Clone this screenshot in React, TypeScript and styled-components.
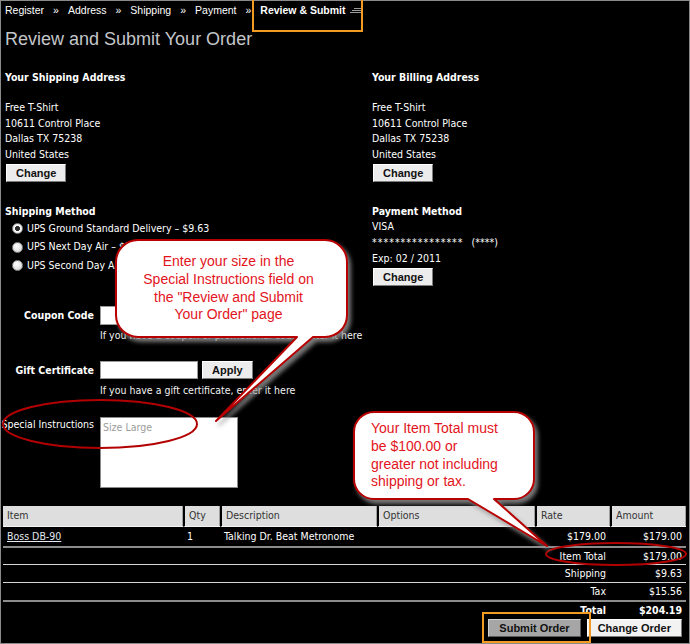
import React from 'react';
import styled, { createGlobalStyle } from 'styled-components';

const GlobalStyle = createGlobalStyle`
  html, body {
    margin: 0;
    padding: 0;
    background: #000;
  }
  body {
    font-family: "DejaVu Sans Condensed", "DejaVu Sans", sans-serif;
    font-stretch: condensed;
    font-size: 10.5px;
    color: #fff;
  }
`;

const arial = `"Liberation Sans", Arial, sans-serif`;

const Page = styled.div`
  position: relative;
  width: 690px;
  height: 644px;
  background: #000;
  box-shadow: inset 0 0 0 1px #8a8a8a;
  overflow: hidden;
  line-height: 15.6px;
`;

const Crumbs = styled.nav`
  display: flex;
  align-items: center;
  gap: 9px;
  height: 20px;
  padding-left: 5px;
  font: 10.5px ${arial};
`;

const Crumb = styled.span<{ $current?: boolean }>`
  font-weight: ${({ $current }) => ($current ? 700 : 400)};
`;

const Title = styled.h1`
  margin: 8px 0 0 5px;
  font: 18px/22px ${arial};
  font-weight: normal;
  color: #c4c6c9;
`;

const Columns = styled.div`
  display: grid;
  grid-template-columns: 367px 1fr;
  row-gap: 21px;
  margin-top: 19px;
  padding-left: 5px;
`;

const Block = styled.div`
  display: flex;
  flex-direction: column;
  align-items: flex-start;
`;

const Heading = styled.h3`
  margin: 0;
  font-size: 10.5px;
  line-height: 16px;
  font-weight: bold;
`;

const Address = styled.div`
  margin-top: 15px;
`;

const Line = styled.div`
  line-height: 15.6px;
  white-space: pre;
`;

const Mask = styled.span`
  letter-spacing: 1px;
  margin-right: 8px;
`;

const SmallButton = styled.button`
  height: 18px;
  padding: 0 9px;
  background: #ececec;
  border: 1px solid;
  border-color: #fff #7c7c7c #7c7c7c #fff;
  font: bold 11px ${arial};
  color: #111;
  cursor: pointer;
`;

const ChangeButton = styled(SmallButton)`
  margin: 2px 0 0 1px;
`;

const RadioList = styled.div`
  padding-left: 7px;
`;

const RadioRow = styled.label`
  display: flex;
  align-items: center;
  gap: 4px;
  height: 18.5px;
`;

const Radio = styled.input`
  appearance: none;
  margin: 0;
  width: 11px;
  height: 11px;
  border-radius: 50%;
  border: 1px solid #8c8c8c;
  background: radial-gradient(circle at 40% 35%, #fff 0%, #d8d8d8 80%);
  &:checked {
    background: radial-gradient(circle, #2b2b2b 0 2.2px, #fff 2.8px, #d4d4d4 100%);
  }
`;

const Form = styled.div`
  margin-top: 20px;
`;

const FormRow = styled.div<{ $top: number }>`
  display: grid;
  grid-template-columns: 94px 1fr;
  column-gap: 6px;
  margin-top: ${({ $top }) => $top}px;
`;

const FieldLabel = styled.label<{ $bold?: boolean; $lh: number }>`
  text-align: right;
  font-weight: ${({ $bold }) => ($bold ? 'bold' : 'normal')};
  line-height: ${({ $lh }) => $lh}px;
  white-space: nowrap;
`;

const Inline = styled.div`
  display: flex;
  align-items: center;
  gap: 4px;
`;

const TextInput = styled.input<{ $h: number }>`
  box-sizing: border-box;
  width: 98px;
  height: ${({ $h }) => $h}px;
  margin: 0;
  border: 1px solid #9a9a9a;
  background: #fff;
`;

const Help = styled.div<{ $top: number }>`
  margin-top: ${({ $top }) => $top}px;
  line-height: 16px;
  white-space: nowrap;
  color: #f2f2f2;
`;

const Notes = styled.textarea`
  display: block;
  box-sizing: border-box;
  width: 138px;
  height: 71px;
  margin: 0;
  padding: 2px;
  border: 1px solid #8a8a8a;
  background: #fff;
  resize: none;
  font: inherit;
  &::placeholder {
    color: #9c9c9c;
  }
`;

const OrderTable = styled.table`
  margin: 18px 0 0 3px;
  width: 683px;
  border-collapse: separate;
  border-spacing: 0;
  table-layout: fixed;
`;

const Th = styled.th`
  height: 20px;
  padding: 0 4px;
  text-align: left;
  font-weight: normal;
  color: #333;
  background: #dedede;
  border-bottom: 1px solid #f4f4f4;
  box-shadow: inset -1px 0 0 #a0a0a0;
  & + & {
    border-left: 2px solid #000;
  }
`;

const rules = {
  thick: '2px solid #8c8c8c',
  thin: '1px solid #d6d6d6',
  none: '0',
};

const Row = styled.tr<{ $lh: number; $rule: keyof typeof rules; $bold?: boolean }>`
  & > td {
    padding: 0 4px;
    line-height: ${({ $lh }) => $lh}px;
    border-bottom: ${({ $rule }) => rules[$rule]};
    font-weight: ${({ $bold }) => ($bold ? 'bold' : 'normal')};
    white-space: nowrap;
  }
`;

const Num = styled.td`
  text-align: right;
`;

const ItemLink = styled.a`
  color: #e2e8ef;
  text-decoration: underline;
`;

const Actions = styled.div`
  display: flex;
  justify-content: flex-end;
  gap: 6px;
  margin-top: 1px;
  padding-right: 8px;
`;

const ActionButton = styled(SmallButton)<{ $primary?: boolean }>`
  padding: 0 10px;
  background: ${({ $primary }) => ($primary ? '#a6a6a6' : '#f2f2f2')};
  border-color: ${({ $primary }) => ($primary ? '#d0d0d0 #5a5a5a #5a5a5a #d0d0d0' : '#fff #7c7c7c #7c7c7c #fff')};
`;

/* annotation layer drawn over the page */

const Overlay = styled.div<{ $x: number; $y: number; $w: number; $h: number }>`
  position: absolute;
  left: ${({ $x }) => $x}px;
  top: ${({ $y }) => $y}px;
  width: ${({ $w }) => $w}px;
  height: ${({ $h }) => $h}px;
  pointer-events: none;
`;

const BubbleShape = styled.svg`
  position: absolute;
  inset: 0;
  overflow: visible;
  filter: drop-shadow(3px 4px 2px rgba(150, 150, 150, 0.8));
`;

const BubbleText = styled.div<{ $w: number; $h: number; $center?: boolean }>`
  position: absolute;
  left: 6px;
  top: 6px;
  width: ${({ $w }) => $w}px;
  height: ${({ $h }) => $h}px;
  box-sizing: border-box;
  display: flex;
  align-items: center;
  justify-content: ${({ $center }) => ($center ? 'center' : 'flex-start')};
  padding-left: ${({ $center }) => ($center ? 0 : 17)}px;
  padding-right: ${({ $center }) => ($center ? 6 : 0)}px;
  text-align: ${({ $center }) => ($center ? 'center' : 'left')};
  font: 14px/17.7px ${arial};
  color: #e3141c;
`;

const Highlight = styled.div<{ $x: number; $y: number; $w: number; $h: number }>`
  position: absolute;
  left: ${({ $x }) => $x}px;
  top: ${({ $y }) => $y}px;
  width: ${({ $w }) => $w}px;
  height: ${({ $h }) => $h}px;
  box-sizing: border-box;
  border: 2px solid #f29b20;
`;

type BubbleProps = {
  x: number;
  y: number;
  w: number;
  h: number;
  rw: number;
  rh: number;
  path: string;
  center?: boolean;
  children: React.ReactNode;
};

const Bubble = ({ x, y, w, h, rw, rh, path, center, children }: BubbleProps) => (
  <Overlay $x={x} $y={y} $w={w} $h={h}>
    <BubbleShape width={w} height={h} viewBox={`0 0 ${w} ${h}`}>
      <path d={path} fill="#fff" stroke="#b80000" strokeWidth="2" strokeLinejoin="round" />
    </BubbleShape>
    <BubbleText $w={rw} $h={rh} $center={center}>
      <div>{children}</div>
    </BubbleText>
  </Overlay>
);

const Ring = ({ cx, cy, rx, ry }: { cx: number; cy: number; rx: number; ry: number }) => (
  <Overlay $x={cx - rx - 2} $y={cy - ry - 2} $w={rx * 2 + 4} $h={ry * 2 + 4}>
    <svg width={rx * 2 + 4} height={ry * 2 + 4}>
      <ellipse cx={rx + 2} cy={ry + 2} rx={rx} ry={ry} fill="none" stroke="#b30000" strokeWidth="2" />
    </svg>
  </Overlay>
);

const steps = ['Register', 'Address', 'Shipping', 'Payment'];

const shippingOptions = [
  { label: 'UPS Ground Standard Delivery – $9.63', checked: true },
  { label: 'UPS Next Day Air – $38.20', checked: false },
  { label: 'UPS Second Day Air – $21.45', checked: false },
];

const addressLines = ['Free T-Shirt', '10611 Control Place', 'Dallas TX 75238', 'United States'];

const totals = [
  { label: 'Item Total', value: '$179.00', lh: 16, rule: 'thin' as const },
  { label: 'Shipping', value: '$9.63', lh: 17, rule: 'thin' as const },
  { label: 'Tax', value: '$15.56', lh: 17, rule: 'thick' as const },
  { label: 'Total', value: '$204.19', lh: 16, rule: 'none' as const, bold: true },
];

export default function App() {
  return (
    <>
      <GlobalStyle />
      <Page>
        <Crumbs>
          {steps.map((step) => (
            <React.Fragment key={step}>
              <Crumb>{step}</Crumb>
              <Crumb>»</Crumb>
            </React.Fragment>
          ))}
          <Crumb $current>
            Review &amp; Submit
            <svg width="13" height="7" style={{ marginLeft: 3 }}>
              <path d="M5 1.5h8M3 3.5h10M1 5.5h12" stroke="#9a9a9a" strokeWidth="1" />
            </svg>
          </Crumb>
        </Crumbs>
        <Title>Review and Submit Your Order</Title>

        <Columns>
          <Block>
            <Heading>Your Shipping Address</Heading>
            <Address>
              {addressLines.map((l) => (
                <Line key={l}>{l}</Line>
              ))}
            </Address>
            <ChangeButton>Change</ChangeButton>
          </Block>
          <Block>
            <Heading>Your Billing Address</Heading>
            <Address>
              {addressLines.map((l) => (
                <Line key={l}>{l}</Line>
              ))}
            </Address>
            <ChangeButton>Change</ChangeButton>
          </Block>
          <Block>
            <Heading>Shipping Method</Heading>
            <RadioList>
              {shippingOptions.map((o) => (
                <RadioRow key={o.label}>
                  <Radio type="radio" name="ship" defaultChecked={o.checked} />
                  {o.label}
                </RadioRow>
              ))}
            </RadioList>
          </Block>
          <Block>
            <Heading>Payment Method</Heading>
            <Line>VISA</Line>
            <Line>
              <Mask>****************</Mask>(****)
            </Line>
            <Line>Exp: 02 / 2011</Line>
            <ChangeButton>Change</ChangeButton>
          </Block>
        </Columns>

        <Form>
          <FormRow $top={0}>
            <FieldLabel $bold $lh={19}>Coupon Code</FieldLabel>
            <div>
              <Inline>
                <TextInput $h={19} />
                <SmallButton>Apply</SmallButton>
              </Inline>
              <Help $top={2}>If you have a coupon or promotional code, enter it here</Help>
            </div>
          </FormRow>
          <FormRow $top={18}>
            <FieldLabel $bold $lh={18}>Gift Certificate</FieldLabel>
            <div>
              <Inline>
                <TextInput $h={18} />
                <SmallButton>Apply</SmallButton>
              </Inline>
              <Help $top={3}>If you have a gift certificate, enter it here</Help>
            </div>
          </FormRow>
          <FormRow $top={19}>
            <FieldLabel $lh={15.6}>Special Instructions</FieldLabel>
            <div>
              <Notes placeholder="Size Large" />
            </div>
          </FormRow>
        </Form>

        <OrderTable>
          <colgroup>
            <col style={{ width: 180 }} />
            <col style={{ width: 37 }} />
            <col style={{ width: 157 }} />
            <col style={{ width: 158 }} />
            <col style={{ width: 75 }} />
            <col style={{ width: 76 }} />
          </colgroup>
          <thead>
            <tr>
              <Th>Item</Th>
              <Th>Qty</Th>
              <Th>Description</Th>
              <Th>Options</Th>
              <Th>Rate</Th>
              <Th>Amount</Th>
            </tr>
          </thead>
          <tbody>
            <Row $lh={19} $rule="thick">
              <td>
                <ItemLink href="#">Boss DB-90</ItemLink>
              </td>
              <td>1</td>
              <td>Talking Dr. Beat Metronome</td>
              <td />
              <Num>$179.00</Num>
              <Num>$179.00</Num>
            </Row>
            {totals.map((t) => (
              <Row key={t.label} $lh={t.lh} $rule={t.rule} $bold={t.bold}>
                <Num colSpan={5}>{t.label}</Num>
                <Num>{t.value}</Num>
              </Row>
            ))}
          </tbody>
        </OrderTable>

        <Actions>
          <ActionButton $primary>Submit Order</ActionButton>
          <ActionButton>Change Order</ActionButton>
        </Actions>

        <Ring cx={100} cy={424} rx={97} ry={24} />
        <Ring cx={616} cy={554} rx={70} ry={11} />

        <Bubble
          x={110}
          y={234}
          w={250}
          h={195}
          rw={231}
          rh={97}
          center
          path="M28 6 H215 A22 22 0 0 1 237 28 V81 A22 22 0 0 1 215 103 H203 L106 187 L187 103 H28 A22 22 0 0 1 6 81 V28 A22 22 0 0 1 28 6 Z"
        >
          Enter your size in the
          <br />
          Special Instructions field on
          <br />
          the "Review and Submit
          <br />
          Your Order" page
        </Bubble>

        <Bubble
          x={348}
          y={406}
          w={205}
          h={145}
          rw={180}
          rh={87}
          path="M26 6 H166 A20 20 0 0 1 186 26 V73 A20 20 0 0 1 166 93 H146 L199 140 L120 93 H26 A20 20 0 0 1 6 73 V26 A20 20 0 0 1 26 6 Z"
        >
          Your Item Total must
          <br />
          be $100.00 or
          <br />
          greater not including
          <br />
          shipping or tax.
        </Bubble>

        <Highlight $x={252} $y={-2} $w={111} $h={34} />
        <Highlight $x={482} $y={612} $w={109} $h={31} />
      </Page>
    </>
  );
}
